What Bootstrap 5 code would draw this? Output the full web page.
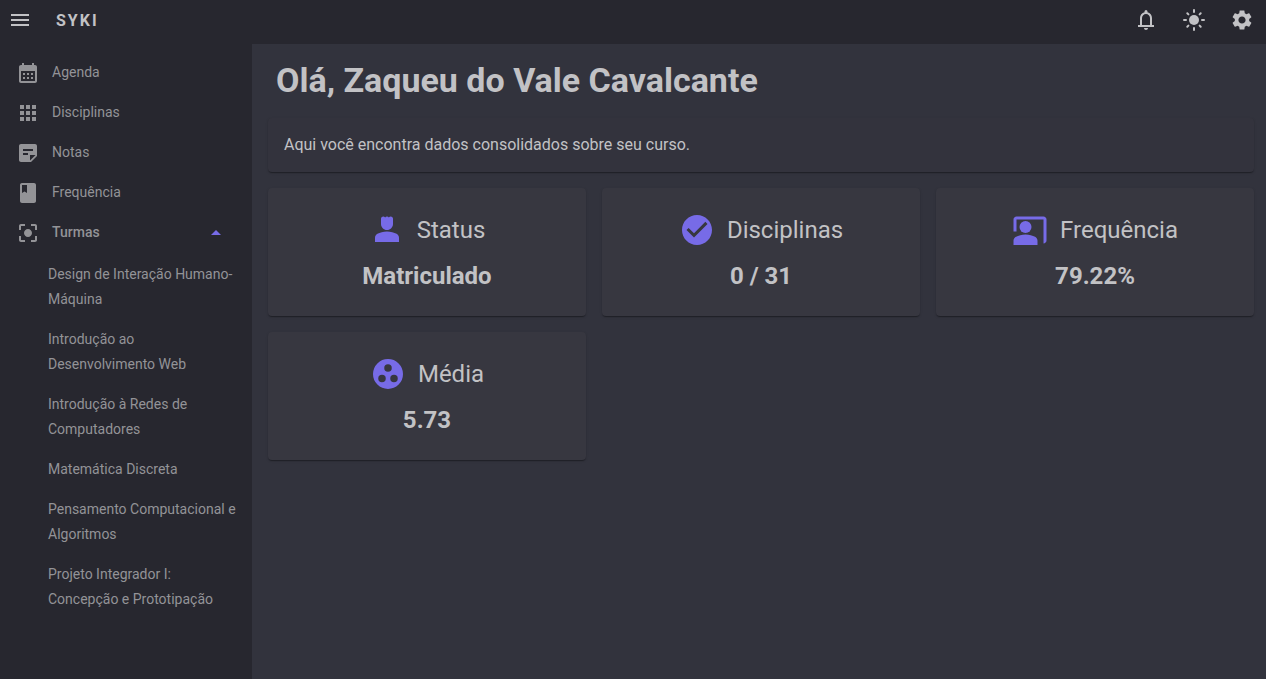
<!DOCTYPE html>
<html lang="pt-BR" data-bs-theme="dark">
<head>
<meta charset="utf-8">
<meta name="viewport" content="width=device-width, initial-scale=1">
<title>SYKI</title>
<link href="https://cdn.jsdelivr.net/npm/bootstrap@5.3.0/dist/css/bootstrap.min.css" rel="stylesheet">
<style>
  :root {
    --syki-bar: #27272f;
    --syki-page: #32333d;
    --syki-surface: #373740;
    --syki-primary: #776be7;
    --syki-text: #c2c2c5;
    --syki-muted: #939397;
    --syki-shadow: 0 2px 1px -1px rgba(0,0,0,.2), 0 1px 1px 0 rgba(0,0,0,.14), 0 1px 3px 0 rgba(0,0,0,.12);
  }
  body { font-family: Roboto, "Liberation Sans", sans-serif; background: var(--syki-page); color: var(--syki-text); }
  svg { display: block; fill: currentColor; flex: none; }
  .topbar { background: var(--syki-bar); height: 44px; padding: 0 12px 4px 8px; }
  .icon-btn { border: 0; padding: 0; background: none; color: inherit; }
  .topbar-actions { gap: 24px; }
  .brand { font-size: 16px; line-height: 25px; font-weight: 700; letter-spacing: 2px; color: inherit; margin-left: 24px; }
  .sidebar { width: 252px; background: var(--syki-bar); padding: 9px 0; }
  .side-link { display: flex; align-items: center; width: 100%; border: 0; background: none; text-align: left; text-decoration: none;
    color: var(--syki-muted); font-size: 14px; line-height: 25px; padding: 7px 12px 8px 16px; }
  .side-link:hover { color: var(--syki-text); }
  .side-link svg { margin-right: 12px; }
  .side-link .caret { margin: 0 12px 0 auto; color: var(--syki-primary); }
  .subnav { margin-top: 2px; }
  .subnav .side-link { padding-left: 48px; }
  .content { padding: 16px 12px 16px 16px; min-width: 0; }
  .greeting { font-size: 34px; line-height: 40px; font-weight: 700; margin: 0 8px 18px; color: inherit; }
  .panel { border-radius: 4px; box-shadow: var(--syki-shadow); }
  .intro { font-size: 16px; line-height: 24px; padding: 15px 16px; margin-bottom: 16px; background: #33333d; }
  .stat { background: var(--syki-surface); padding: 24px 16px; text-align: center; font-size: 24px; line-height: 32px; }
  .stat-head { display: flex; align-items: center; justify-content: center; gap: 12px; margin-bottom: 12px; }
  .stat-head h2 { font-size: 24px; line-height: 32px; font-weight: 400; margin: 0; color: inherit; }
  .stat-head svg { color: var(--syki-primary); }
</style>
</head>
<body class="d-flex flex-column min-vh-100">
<header class="topbar d-flex align-items-center">
  <button type="button" class="icon-btn" aria-label="Menu"><svg width="24" height="24" viewBox="0 0 24 24"><path d="M3 18h18v-2H3v2zm0-5h18v-2H3v2zm0-7v2h18V6H3z"/></svg></button>
  <a href="#" class="brand text-decoration-none">SYKI</a>
  <div class="topbar-actions d-flex ms-auto">
    <button type="button" class="icon-btn" aria-label="Notificações"><svg width="24" height="24" viewBox="0 0 24 24"><path d="M12 22c1.100 0 2-.9 2-2h-4c0 1.100.9 2 2 2zM20 17h-2v-7c0-2.800-1.900-5.200-4.500-5.800V3.500a1.500 1.500 0 0 0-3 0v.7C7.900 4.800 6 7.200 6 10v7H4v2h16zM8 17v-7c0-2.200 1.800-4 4-4s4 1.800 4 4v7z"/></svg></button>
    <button type="button" class="icon-btn" aria-label="Modo claro"><svg width="24" height="24" viewBox="0 0 24 24"><circle cx="12" cy="12" r="5"/><path d="M2 12h2M20 12h2M12 2v2M12 20v2M5.300 5.300l1.100 1.100M17.600 17.600l1.100 1.100M18.700 5.300l-1.100 1.100M6.400 17.600l-1.100 1.100" stroke="currentColor" stroke-width="2" stroke-linecap="round"/></svg></button>
    <button type="button" class="icon-btn" aria-label="Configurações"><svg width="24" height="24" viewBox="0 0 24 24"><path d="M19.140 12.940c.04-.3.06-.61.06-.94 0-.32-.02-.64-.07-.94l2.030-1.580c.18-.14.23-.41.12-.61l-1.920-3.320c-.12-.22-.37-.29-.59-.22l-2.390.96c-.5-.38-1.030-.7-1.620-.94l-.36-2.540c-.04-.24-.24-.41-.48-.41h-3.840c-.24 0-.43.17-.47.41l-.36 2.540c-.59.24-1.130.57-1.620.94l-2.390-.96c-.22-.08-.47 0-.59.22L2.740 8.870c-.12.21-.08.47.12.61l2.030 1.580c-.05.3-.09.63-.09.94s.02.64.07.94l-2.030 1.580c-.18.14-.23.41-.12.61l1.920 3.320c.12.22.37.29.59.22l2.390-.96c.5.38 1.030.7 1.620.94l.36 2.540c.05.24.24.41.48.41h3.840c.24 0 .44-.17.47-.41l.36-2.540c.59-.24 1.130-.56 1.620-.94l2.390.96c.22.08.47 0 .59-.22l1.920-3.320c.12-.22.07-.47-.12-.61l-2.010-1.580zM12 15.600c-1.980 0-3.600-1.620-3.600-3.600s1.620-3.600 3.600-3.600 3.600 1.620 3.600 3.600-1.620 3.600-3.600 3.600z"/></svg></button>
  </div>
</header>
<div class="d-flex flex-grow-1">
  <nav class="sidebar flex-shrink-0" aria-label="Principal">
    <ul class="list-unstyled m-0">
      <li><a href="#" class="side-link"><svg width="24" height="24" viewBox="0 0 24 24"><path d="M19 4h-1V2h-2v2H8V2H6v2H5c-1.110 0-1.990.9-1.990 2L3 20c0 1.100.89 2 2 2h14c1.100 0 2-.9 2-2V6c0-1.100-.9-2-2-2zm0 16H5V10h14v10zM9 14H7v-2h2v2zm4 0h-2v-2h2v2zm4 0h-2v-2h2v2zm-8 4H7v-2h2v2zm4 0h-2v-2h2v2zm4 0h-2v-2h2v2z"/></svg>Agenda</a></li>
      <li><a href="#" class="side-link"><svg width="24" height="24" viewBox="0 0 24 24"><path d="M4 8h4V4H4v4zm6 12h4v-4h-4v4zm-6 0h4v-4H4v4zm0-6h4v-4H4v4zm6 0h4v-4h-4v4zm6-10v4h4V4h-4zm-6 4h4V4h-4v4zm6 6h4v-4h-4v4zm0 6h4v-4h-4v4z"/></svg>Disciplinas</a></li>
      <li><a href="#" class="side-link"><svg width="24" height="24" viewBox="0 0 24 24"><path d="M19 3H4.990C3.890 3 3 3.900 3 5l.01 14c0 1.100.89 2 1.990 2h10l6-6V5c0-1.100-.9-2-2-2zM7 8h10v2H7V8zm5 6H7v-2h5v2zm2 5.500V14h5.500L14 19.500z"/></svg>Notas</a></li>
      <li><a href="#" class="side-link"><svg width="24" height="24" viewBox="0 0 24 24"><path d="M18 2H6c-1.100 0-2 .9-2 2v16c0 1.100.9 2 2 2h12c1.100 0 2-.9 2-2V4c0-1.100-.9-2-2-2zM6 4h5v8l-2.500-1.500L6 12V4z"/></svg>Frequência</a></li>
      <li>
        <button type="button" class="side-link fw-medium" data-bs-toggle="collapse" data-bs-target="#turmas" aria-expanded="true" aria-controls="turmas"><svg width="24" height="24" viewBox="0 0 24 24"><path d="M12 8c-2.210 0-4 1.790-4 4s1.790 4 4 4 4-1.790 4-4-1.790-4-4-4zm-7 7H3v4c0 1.100.9 2 2 2h4v-2H5v-4zM5 5h4V3H5c-1.100 0-2 .9-2 2v4h2V5zm14-2h-4v2h4v4h2V5c0-1.100-.9-2-2-2zm0 16h-4v2h4c1.100 0 2-.9 2-2v-4h-2v4z"/></svg>Turmas<svg class="caret" width="24" height="24" viewBox="0 0 24 24"><path d="M7 14l5-5 5 5z"/></svg></button>
        <ul id="turmas" class="subnav list-unstyled collapse show">
          <li><a href="#" class="side-link">Design de Interação Humano-Máquina</a></li>
          <li><a href="#" class="side-link">Introdução ao Desenvolvimento Web</a></li>
          <li><a href="#" class="side-link">Introdução à Redes de Computadores</a></li>
          <li><a href="#" class="side-link">Matemática Discreta</a></li>
          <li><a href="#" class="side-link">Pensamento Computacional e Algoritmos</a></li>
          <li><a href="#" class="side-link">Projeto Integrador I: Concepção e Prototipação</a></li>
        </ul>
      </li>
    </ul>
  </nav>
  <main class="content flex-grow-1">
    <h1 class="greeting">Olá, Zaqueu do Vale Cavalcante</h1>
    <div class="panel intro">Aqui você encontra dados consolidados sobre seu curso.</div>
    <div class="row g-3">
      <div class="col-4">
        <section class="panel stat">
          <div class="stat-head"><svg width="36" height="36" viewBox="0 0 24 24"><path d="M18.390 14.560C16.710 13.700 14.530 13 12 13s-4.710.7-6.390 1.560C4.610 15.070 4 16.100 4 17.220V20h16v-2.780c0-1.120-.61-2.150-1.610-2.660zM12 12c2.210 0 4-1.790 4-4V4.500c0-.83-.67-1.500-1.500-1.500-.52 0-.98.27-1.250.67-.27-.4-.73-.67-1.250-.67s-.98.27-1.250.67c-.27-.4-.73-.67-1.250-.67C8.670 3 8 3.670 8 4.500V8c0 2.210 1.790 4 4 4z"/></svg><h2>Status</h2></div>
          <div class="fw-bold">Matriculado</div>
        </section>
      </div>
      <div class="col-4">
        <section class="panel stat">
          <div class="stat-head"><svg width="36" height="36" viewBox="0 0 24 24"><path d="M12 2C6.480 2 2 6.480 2 12s4.480 10 10 10 10-4.480 10-10S17.520 2 12 2zm-2 15l-5-5 1.410-1.410L10 14.170l7.590-7.590L19 8l-9 9z"/></svg><h2>Disciplinas</h2></div>
          <div class="fw-bold">0 / 31</div>
        </section>
      </div>
      <div class="col-4">
        <section class="panel stat">
          <div class="stat-head"><svg width="36" height="36" viewBox="0 0 24 24"><path d="M21 3H3c-1.100 0-2 .9-2 2v8h2V5h18v16c1.100 0 2-.9 2-2V5c0-1.100-.9-2-2-2z"/><circle cx="9" cy="10" r="4"/><path d="M15.390 16.560C13.710 15.700 11.530 15 9 15s-4.710.7-6.390 1.560C1.610 17.070 1 18.100 1 19.220V22h16v-2.780c0-1.120-.61-2.150-1.610-2.660z"/></svg><h2>Frequência</h2></div>
          <div class="fw-bold">79.22%</div>
        </section>
      </div>
      <div class="col-4">
        <section class="panel stat">
          <div class="stat-head"><svg width="36" height="36" viewBox="0 0 24 24"><path fill-rule="evenodd" d="M12 2a10 10 0 1 0 0 20 10 10 0 0 0 0-20zM12 5.500a2.500 2.500 0 1 1 0 5 2.500 2.500 0 0 1 0-5zM8 12.500a2.500 2.500 0 1 1 0 5 2.500 2.500 0 0 1 0-5zM16 12.500a2.500 2.500 0 1 1 0 5 2.500 2.500 0 0 1 0-5z"/></svg><h2>Média</h2></div>
          <div class="fw-bold">5.73</div>
        </section>
      </div>
    </div>
  </main>
</div>
<script src="https://cdn.jsdelivr.net/npm/bootstrap@5.3.0/dist/js/bootstrap.bundle.min.js"></script>
</body>
</html>
